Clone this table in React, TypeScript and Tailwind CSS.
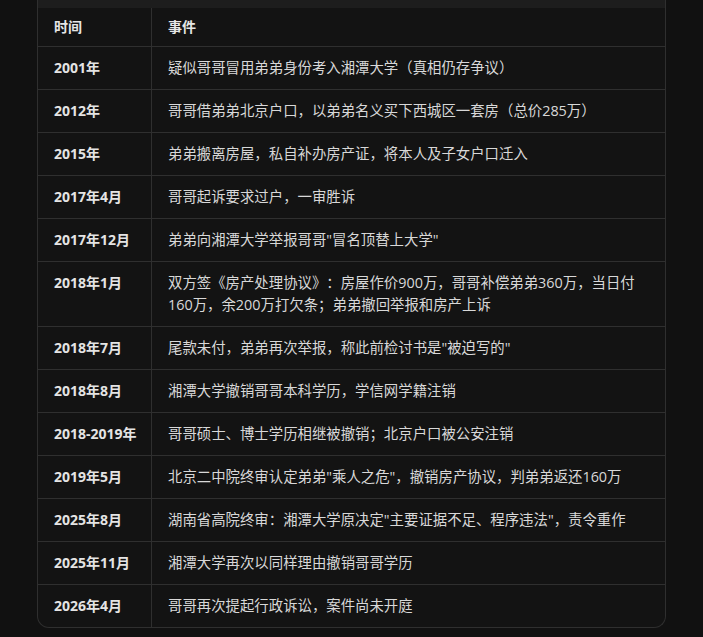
import React from 'react';

const rows: [string, string][] = [
    ['2001年', '疑似哥哥冒用弟弟身份考入湘潭大学（真相仍存争议）'],
    ['2012年', '哥哥借弟弟北京户口，以弟弟名义买下西城区一套房（总价285万）'],
    ['2015年', '弟弟搬离房屋，私自补办房产证，将本人及子女户口迁入'],
    ['2017年4月', '哥哥起诉要求过户，一审胜诉'],
    ['2017年12月', '弟弟向湘潭大学举报哥哥"冒名顶替上大学"'],
    ['2018年1月', '双方签《房产处理协议》：房屋作价900万，哥哥补偿弟弟360万，当日付160万，余200万打欠条；弟弟撤回举报和房产上诉'],
    ['2018年7月', '尾款未付，弟弟再次举报，称此前检讨书是"被迫写的"'],
    ['2018年8月', '湘潭大学撤销哥哥本科学历，学信网学籍注销'],
    ['2018-2019年', '哥哥硕士、博士学历相继被撤销；北京户口被公安注销'],
    ['2019年5月', '北京二中院终审认定弟弟"乘人之危"，撤销房产协议，判弟弟返还160万'],
    ['2025年8月', '湖南省高院终审：湘潭大学原决定"主要证据不足、程序违法"，责令重作'],
    ['2025年11月', '湘潭大学再次以同样理由撤销哥哥学历'],
    ['2026年4月', '哥哥再次提起行政诉讼，案件尚未开庭'],
];

export default function App() {
    return (
        <div
            className="w-[703px] h-[637px] overflow-hidden bg-[#111111] text-[14px] [text-spacing-trim:space-all]"
            style={{ fontFamily: '"Open Sans", "Noto Sans CJK SC", sans-serif' }}
        >
            <div className="ml-[37px] w-[629px] border-x border-b border-[#2f2f2f] rounded-b-[12px] overflow-hidden bg-[#131313]">
                <div className="h-[8px] bg-[#1d1d1d]" />
                <div className="grid grid-cols-[114px_1fr]">
                    <div className="px-[16px] py-[8px] leading-[22px] font-bold text-[#e6e6e6] border-r border-b border-[#2f2f2f]">
                        时间
                    </div>
                    <div className="px-[16px] py-[8px] leading-[22px] font-bold text-[#e6e6e6] border-b border-[#2f2f2f]">
                        事件
                    </div>
                    {rows.map(([time, event], i) => (
                        <React.Fragment key={time}>
                            <div
                                className={`pl-[16px] pr-2 py-[10px] leading-[22px] font-bold text-[#e4e4e4] border-r border-[#2f2f2f] ${
                                    i < rows.length - 1 ? 'border-b' : ''
                                }`}
                            >
                                {time}
                            </div>
                            <div
                                className={`pl-[16px] pr-[20px] py-[10px] leading-[22px] text-[14.4px] text-[#d8d8d8] border-[#2f2f2f] ${
                                    i < rows.length - 1 ? 'border-b' : ''
                                }`}
                            >
                                {event}
                            </div>
                        </React.Fragment>
                    ))}
                </div>
            </div>
        </div>
    );
}
